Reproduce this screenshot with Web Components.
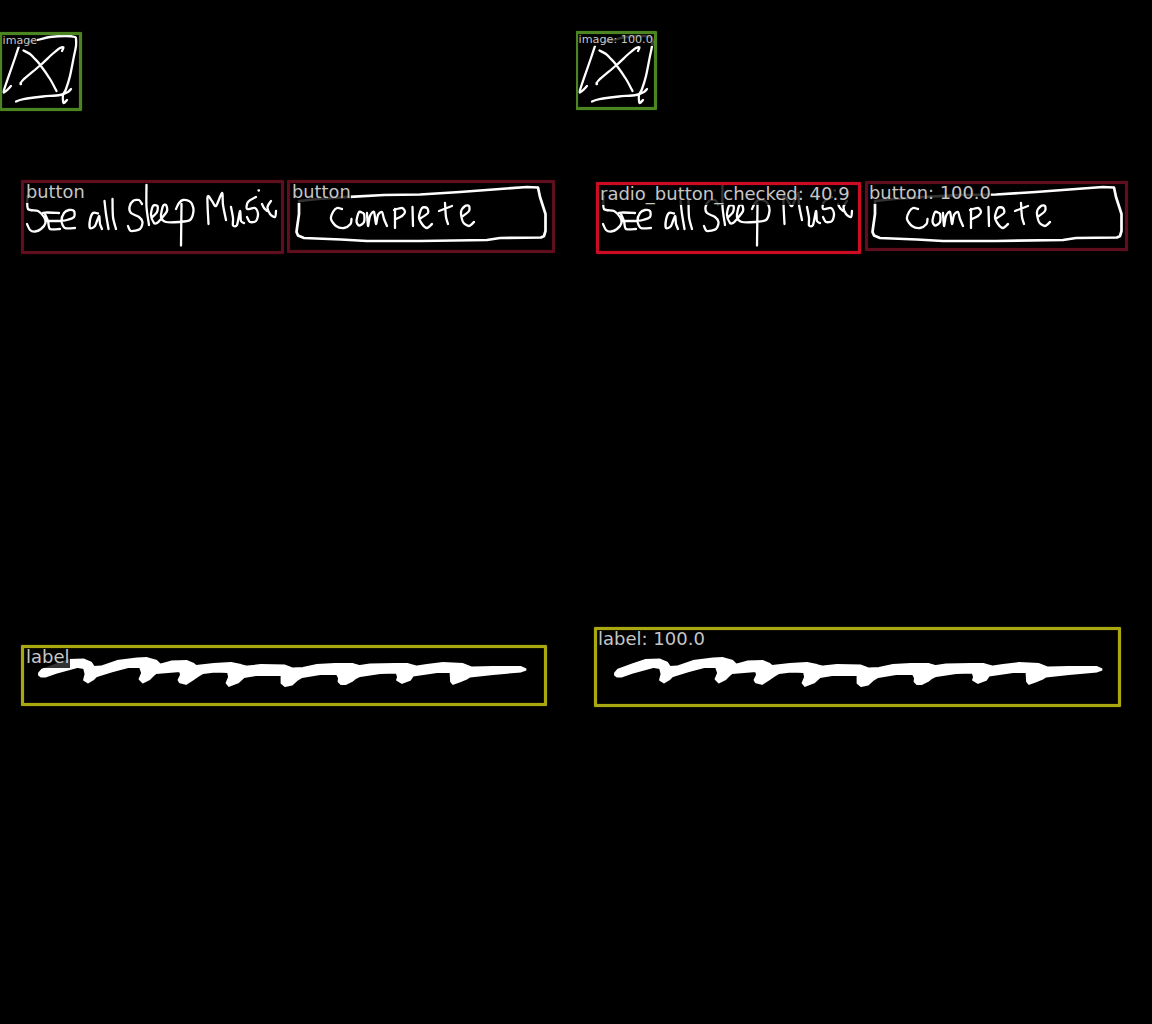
<!DOCTYPE html>
<html lang="en">
<head>
<meta charset="utf-8">
<title>Detections</title>
<style>
html,body{margin:0;background:#000;overflow:hidden}
</style>
</head>
<body>
<detection-compare>
  <sketch-panel>
    <detection-box x="-1" y="32" w="83" h="79" color="#4b8522" tx="2.6" baseline="44" size="11.1">image</detection-box>
    <detection-box x="21" y="180" w="262.500" h="74" color="#5f0e1e" tx="26" baseline="198" size="17.8">button</detection-box>
    <detection-box x="287" y="180" w="268" h="73" color="#5f0e1e" tx="292" baseline="198" size="17.8">button</detection-box>
    <detection-box x="21" y="645" w="526" h="61" color="#aaa811" tx="26" baseline="663">label</detection-box>
  </sketch-panel>
  <sketch-panel>
    <detection-box x="-1" y="31" w="82" h="79" color="#4b8522" tx="2.6" baseline="43" size="11.2">image: 100.0</detection-box>
    <detection-box x="289" y="181" w="263" h="70" color="#5f0e1e" tx="293" baseline="199" size="17.9">button: 100.0</detection-box>
    <detection-box x="20" y="182" w="265" h="72" color="#cc0c22" tx="24" baseline="200">radio_button_checked: 40.9</detection-box>
    <detection-box x="18" y="627" w="527" h="80" color="#aaa811" tx="22" baseline="645">label: 100.0</detection-box>
  </sketch-panel>
</detection-compare>
<script>
customElements.define('detection-compare', class extends HTMLElement {
  constructor() {
    super();
    this.attachShadow({mode: 'open'}).innerHTML =
      '<style>:host{display:flex;width:1152px;height:1024px;background:#000}</style><slot></slot>';
  }
});

// Turns "M x y L x y ..." strokes into rounded curves through the same points.
function smooth(d) {
  return d.split('M').filter(Boolean).map(part => {
    const p = part.split('L').map(s => s.trim().split(/\s+/).map(Number));
    let out = `M${p[0]}`;
    for (let i = 0; i < p.length - 1; i++) {
      const a = p[i - 1] || p[i], b = p[i], c = p[i + 1], e = p[i + 2] || c;
      const k = 7;
      out += `C${b[0] + (c[0] - a[0]) / k},${b[1] + (c[1] - a[1]) / k} ${c[0] - (e[0] - b[0]) / k},${c[1] - (e[1] - b[1]) / k} ${c}`;
    }
    return out;
  }).join('');
}

customElements.define('hand-sketch', class extends HTMLElement {
  constructor() {
    super();
    const root = this.attachShadow({mode: 'open'});
    root.innerHTML = `
<style>
:host{display:block;width:576px;height:1024px}
svg{display:block}
path{fill:none;stroke:#fff;stroke-width:2.3;stroke-linejoin:round;stroke-linecap:round}
.fill{fill:#fff;stroke-width:1.8}
.frame{stroke-width:2.7}
</style>
<svg width="576" height="1024" viewBox="0 0 576 1024">
  <!-- crossed picture frame -->
  <path class="ink" d="M19 46L15 58L4 90L6 91L11 86M28 42L39.500 39.500L50 37L66 36L75 37L76 39L76 46L74 56L70 76L66 89L63 95L63 101L64 103L67 100M23.500 50.500L30 54L34 58L39.500 64L50 79L56.500 91M20.500 84L23 80L40 65.500L53 53.500L60 48L63.500 47.500L62 51M20.500 83L21 84M16 101.500L20 100L27 98.500L43 96.500L60 95L68 92L71 89"/>
  <!-- See -->
  <path class="ink" d="M27.500 196L28 209L38 211L44 217L45.500 223L41 229L35 231.500L30 230L27 224M43 213L47 212.500L59 213M45 214L48 221L50 229L60 229M46 221L59 221M60 221L67 220L74 217L74 211L69 210L64 213L61.500 221L65 228L75 228"/>
  <!-- all -->
  <path class="ink" d="M98 213.500L93 213L90 220L90 228L95 226L99 216L100 224L102 229M104.500 201L106 214L108.500 229M112.500 199L113 217L116 229"/>
  <!-- Sleep -->
  <path class="ink" d="M142 204L139 200L133 201L129.500 207L131 213L139 217L142.500 222L140 229L131 231L128 226M146.500 185L146.500 207L149 225M151.500 218L157 212L157.500 206L153 206L151 215L154 223L157 223L161 219L167 211L166 205L163 206L161 217L166 222L179 222L190 220L193.500 211L192 204L189 201L183 200L179 203L176 209M181.500 204L181 245.500"/>
  <!-- Music -->
  <path class="ink" d="M208.500 224L207.500 197L212 201L216 206L222 193L223 205L226 220M231 207L233 218L233 225.500L237 225L240 211L241 221L244 223M256 197L248 202L247 209L255 208L258 214L256 221L250 222L247 217M262 204L264 208L267 211M271 201L267.500 207L270 214L275 217L276 211M258.500 190.500L259 190.500"/>
  <!-- outline round Complete -->
  <path class="frame" d="M299 201L318 199L350 196.800L384 195L420 194.500L460 192L500 189L527 187L538 187.500L540 197L545.500 214L545.500 231L544 236L541 237.500L500 238L487 240L420 241L367 241L341 239.500L304 238L298 235.500L296.500 232L297 228L299 214L299 203"/>
  <!-- Complete -->
  <path class="ink" d="M342 209L337 208L333 212L331 219L336 226L344 228L350.500 224L351.500 219M363 213L359 212L356.500 221L359 225.500L364 222L364 214L360 212M367 213L368 226L370 216L374 212L376 224L378 215L382 212L384 219L387 226M395 209L395 228M394 210L402 208L405 212L402 216L396 219M412.500 207L413 226M421 218L428 213L427 208L422 208L419 217L422 224L427 228L432 224M445 203L446 217L448 224M439 211L452 206M463 216L469 211L469 206L465 206L461 212L463 222L469 226L474 222"/>
  <!-- thick scribble -->
  <path class="fill" d="M39 673L42 669.500L57 664L69 660L84 659.500L91 662.500L94 667L101 666.500L117 661L137 658.500L147 658L156 660.500L160 664.500L171 661.500L187 661L193 663.500L196 666L214 664L231 663L241 665L247 666.500L261 665L285 665.500L293 668.500L303 668L317 665L335 664L353 664L360 666L370 664.500L395 664L408 664L417 666.500L427 665L443 663L463 664L472 667.500L493 667L521 667L525.500 669V670L521 671.500L493 674L470 676.500L466 679L460 681.500L453 684L451 681.500L450.500 672L437 672L413 675.500L410 680L402 683L397 680L398 677L396.500 672.500L380 673L360 676L355 678.500L352 681L346 684H341L338.500 681.500L339 678L337 674H320L302 677L297 680L292 684.500L285 686L281.500 683V675H256L244 677L238 682.500L229 686L226.500 683L229 677L228 672L215 671.500L203 673L198 676L193 679.500L186 684L180 682.500L178.500 680L181 675L180 671L156 673L153 675.500L149 679.500L143 682.500L139.500 679L142 673L140 667H129L112 671.500L96 676.500L93 679.500L88 682.500L84 680L85.500 674L84 668L78 667L56 673L46 676.500H41L39 675Z"/>
</svg>`;
    for (const p of root.querySelectorAll('.ink')) p.setAttribute('d', smooth(p.getAttribute('d')));
  }
});

customElements.define('sketch-panel', class extends HTMLElement {
  constructor() {
    super();
    this.attachShadow({mode: 'open'}).innerHTML =
      '<style>:host{display:block;position:relative;width:576px;height:1024px;overflow:hidden}</style><hand-sketch></hand-sketch><slot></slot>';
  }
});

customElements.define('detection-box', class extends HTMLElement {
  connectedCallback() {
    const n = (k, d) => parseFloat(this.getAttribute(k) ?? d);
    const size = n('size', 18), small = size < 15;
    const rise = small ? 10 : 16, line = small ? 13 : 20;
    const color = this.getAttribute('color');
    this.attachShadow({mode: 'open'}).innerHTML = `
<style>
:host{display:block;position:absolute;box-sizing:border-box;left:${n('x')}px;top:${n('y')}px;width:${n('w')}px;height:${n('h')}px;padding:3px}
:host::after{content:"";position:absolute;inset:0;border:3px solid ${color};border-radius:1px;box-shadow:0 0 1px ${color},inset 0 0 1px ${color}}
span{display:block;width:max-content;margin:${n('baseline') - rise - n('y') - 3}px 0 0 ${n('tx') - n('x') - 3}px;padding-bottom:${small ? 0 : 1}px;
  background:rgba(0,0,0,.8);color:#c6c6c6;font:${size}px/${line}px "DejaVu Sans",sans-serif;white-space:nowrap}
</style><span><slot></slot></span>`;
  }
});
</script>
</body>
</html>
